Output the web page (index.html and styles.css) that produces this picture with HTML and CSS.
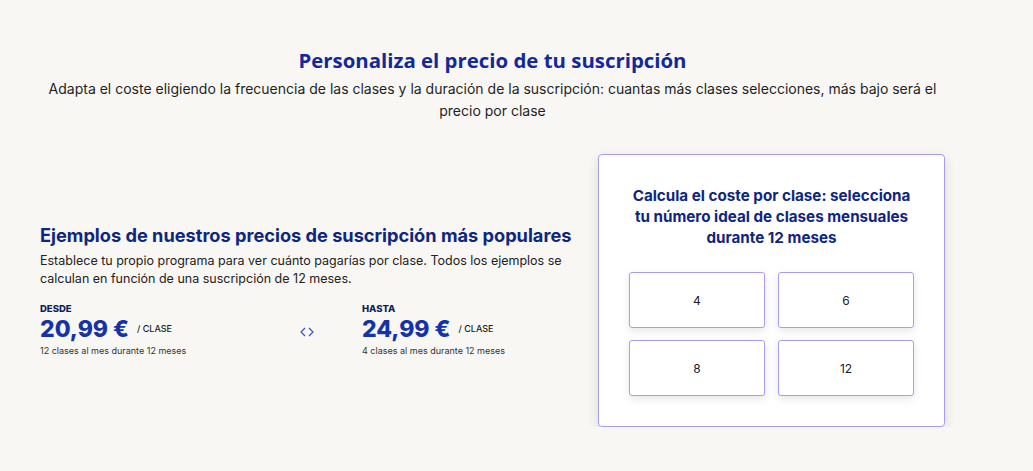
FILE: index.html
```html
<!DOCTYPE html>
<html lang="es">
<head>
    <meta charset="UTF-8">
    <meta name="viewport" content="width=device-width, initial-scale=1.0">
    <title>Personaliza el precio de tu suscripción</title>
    <link rel="stylesheet" href="styles.css">
</head>
<body>
    <section class="pricing">
        <div class="intro">
            <h1>Personaliza el precio de tu suscripción</h1>
            <p>Adapta el coste eligiendo la frecuencia de las clases y la duración de la suscripción: cuantas más clases selecciones, más bajo será el precio por clase</p>
        </div>

        <div class="main">
            <div class="examples">
                <h2>Ejemplos de nuestros precios de suscripción más populares</h2>
                <p class="lead">Establece tu propio programa para ver cuánto pagarías por clase. Todos los ejemplos se calculan en función de una suscripción de 12 meses.</p>

                <div class="range">
                    <div class="price-box">
                        <span class="label">Desde</span>
                        <div class="price">20,99 € <small>/ clase</small></div>
                        <span class="note">12 clases al mes durante 12 meses</span>
                    </div>

                    <svg class="arrows" width="14" height="10" viewBox="0 0 14 10" fill="none" stroke="#3b4fc4" stroke-width="1.2">
                        <path d="M5 1 L1 5 L5 9"/>
                        <path d="M9 1 L13 5 L9 9"/>
                    </svg>

                    <div class="price-box last">
                        <span class="label">Hasta</span>
                        <div class="price">24,99 € <small>/ clase</small></div>
                        <span class="note">4 clases al mes durante 12 meses</span>
                    </div>
                </div>
            </div>

            <div class="calculator">
                <h3>Calcula el coste por clase: selecciona tu número ideal de clases mensuales durante 12 meses</h3>
                <div class="options">
                    <button>4</button>
                    <button>6</button>
                    <button>8</button>
                    <button>12</button>
                </div>
            </div>
        </div>
    </section>
</body>
</html>
```

FILE: styles.css
```css
* {
    margin: 0;
    padding: 0;
    box-sizing: border-box;
}

body {
    background: #f8f7f4;
    font-family: 'Inter', 'Open Sans', sans-serif;
    color: #222;
}

.pricing {
    width: 905px;
    margin-left: 40px;
    padding-top: 45px;
}

.intro {
    text-align: center;
}

h1 {
    font-family: 'Open Sans', sans-serif;
    font-size: 20.4px;
    font-weight: 700;
    line-height: 30px;
    color: #13289a;
    margin-bottom: 3px;
}

.intro p {
    font-size: 14px;
    line-height: 22px;
    color: #1f1f1f;
}

.main {
    display: flex;
    align-items: center;
    justify-content: space-between;
    margin-top: 32px;
}

.examples {
    width: 535px;
}

h2 {
    font-size: 18.2px;
    font-weight: 700;
    line-height: 24px;
    color: #0e2680;
    margin-bottom: 5px;
}

.lead {
    font-size: 12.5px;
    line-height: 18px;
    color: #222;
    margin-bottom: 15px;
}

.range {
    display: flex;
    align-items: center;
}

.price-box {
    flex: none;
    width: 260px;
}

.price-box.last {
    width: 170px;
    margin-left: 48px;
}

.arrows {
    flex: none;
    margin-top: 2px;
}

.label {
    display: block;
    font-size: 9.5px;
    font-weight: 800;
    text-transform: uppercase;
    color: #0c1f5e;
    line-height: 12px;
}

.price {
    font-size: 23px;
    font-weight: 800;
    color: #1532a8;
    line-height: 28px;
}

.price small {
    font-size: 9px;
    font-weight: 500;
    text-transform: uppercase;
    color: #222;
    vertical-align: 5px;
    margin-left: 3px;
}

.note {
    display: block;
    font-size: 9px;
    color: #333;
    line-height: 14px;
    margin-top: 1px;
}

.calculator {
    width: 347px;
    background: #fff;
    border: 1px solid #a89cf0;
    border-radius: 4px;
    box-shadow: 0 4px 12px rgba(0, 0, 0, 0.12);
    padding: 30px 30px 30px;
}

h3 {
    font-size: 15.2px;
    font-weight: 700;
    line-height: 21px;
    color: #0e2680;
    text-align: center;
    margin-bottom: 24px;
}

.options {
    display: grid;
    grid-template-columns: repeat(2, 1fr);
    gap: 12px 13px;
}

button {
    height: 56px;
    background: #fff;
    border: 1px solid #a89cf0;
    border-radius: 3px;
    box-shadow: 0 3px 8px rgba(0, 0, 0, 0.1);
    font-family: 'Inter', sans-serif;
    font-size: 12px;
    color: #1a1a2e;
    cursor: pointer;
}
```
